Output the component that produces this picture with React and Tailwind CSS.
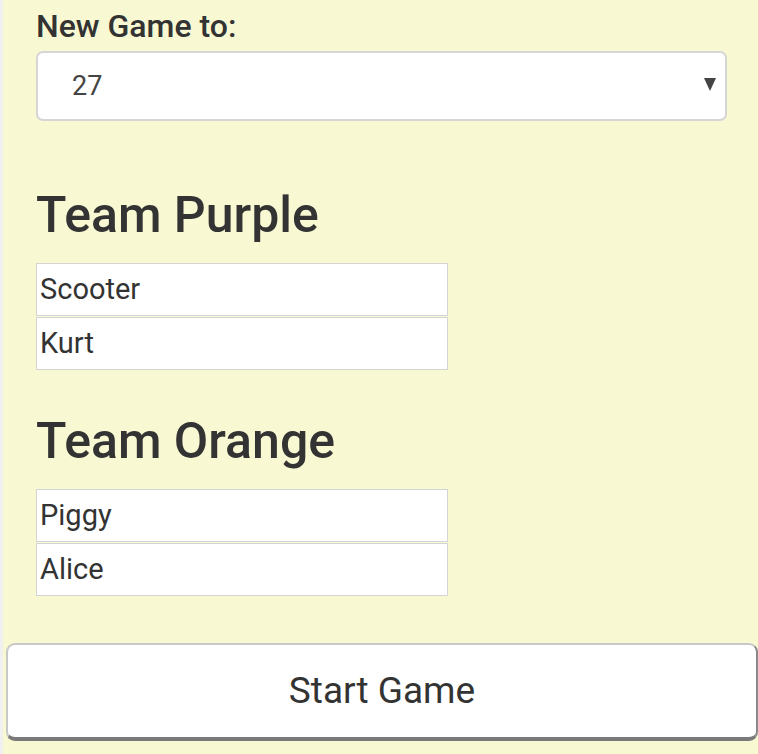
import React from 'react'

const NameInput = ({ value }) => (
    <input
        defaultValue={value}
        className="block w-[412px] h-[53px] bg-white border border-[#d4d4d4] pl-[3px] pb-[2px] text-[29px] text-[#333] outline-none"
    />
)

const Team = ({ name, players, top }) => (
    <div>
        <h2 className={`text-[50px] font-medium text-[#333] leading-none mb-[23px] ${top}`}>{name}</h2>
        <div className="flex flex-col gap-[1px]">
            {players.map((p) => (
                <NameInput key={p} value={p} />
            ))}
        </div>
    </div>
)

export default function App() {
    return (
        <div
            className="w-[758px] h-[754px] bg-[#f0f0f0] pl-[3px] overflow-hidden"
            style={{ fontFamily: 'Roboto, "Liberation Sans", sans-serif' }}
        >
            <div className="h-full bg-[#f8f8d2] pl-[33px] pt-[10px]">
                <label className="block text-[32px] font-medium text-[#333] leading-none mb-[9px]">New Game to:</label>
                <div className="relative w-[691px] h-[70px] bg-white border-2 border-[#d6d6d6] rounded-[7px] flex items-center pl-[34px]">
                    <span className="text-[27px] text-[#444]">27</span>
                    <span className="absolute right-[9px] top-[25px] w-0 h-0 border-l-[6px] border-r-[6px] border-t-[13px] border-l-transparent border-r-transparent border-t-[#444]" />
                </div>
                <Team name="Team Purple" players={['Scooter', 'Kurt']} top="mt-[69px]" />
                <Team name="Team Orange" players={['Piggy', 'Alice']} top="mt-[46px]" />
                <div className="-ml-[30px] mt-[47px]">
                    <button className="w-[752px] h-[98px] bg-white border-2 border-[#c8c8c8] border-b-[4px] border-b-[#7a7a7a] border-r-[#8a8a8a] rounded-[9px] text-[37px] text-[#333]">
                        Start Game
                    </button>
                </div>
            </div>
        </div>
    )
}
